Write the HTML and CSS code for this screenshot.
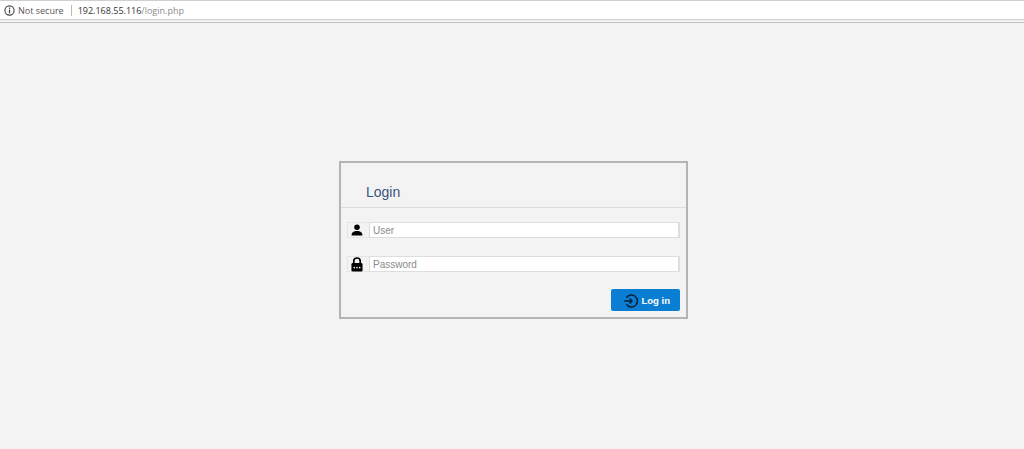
FILE: index.html
```html
<!DOCTYPE html>
<html lang="en">
<head>
    <meta charset="UTF-8">
    <meta name="viewport" content="width=device-width, initial-scale=1.0">
    <title>Login</title>
    <link rel="stylesheet" href="styles.css">
</head>
<body>
    <!-- Browser address bar -->
    <div class="address-bar">
        <svg class="info-icon" width="11" height="11" viewBox="0 0 11 11">
            <circle cx="5.5" cy="5.5" r="4.6" fill="none" stroke="#444" stroke-width="1.1"/>
            <rect x="4.9" y="4.7" width="1.3" height="3.6" fill="#444"/>
            <rect x="4.9" y="2.6" width="1.3" height="1.3" fill="#444"/>
        </svg>
        <span class="not-secure">Not secure</span>
        <span class="divider"></span>
        <span class="host">192.168.55.116</span><span class="path">/login.php</span>
    </div>
    <div class="toolbar-strip"></div>

    <div class="page">
        <div class="login-box">
            <div class="login-header">
                <h1>Login</h1>
            </div>
            <form class="login-form">
                <div class="field">
                    <span class="field-icon">
                        <svg width="12" height="12" viewBox="0 0 13 13">
                            <circle cx="6.5" cy="3.6" r="3" fill="#000"/>
                            <path d="M0.6 12.4 C0.6 8.8 3.4 7.6 6.5 7.6 C9.6 7.6 12.4 8.8 12.4 12.4 Z" fill="#000"/>
                        </svg>
                    </span>
                    <input type="text" placeholder="User">
                </div>
                <div class="field">
                    <span class="field-icon">
                        <svg width="12" height="15" viewBox="0 0 13 16">
                            <path d="M3 7 V4.5 A3.5 3.5 0 0 1 10 4.5 V7" fill="none" stroke="#000" stroke-width="1.8"/>
                            <rect x="0.5" y="6.4" width="12" height="9.2" rx="1.4" fill="#000"/>
                            <circle cx="3.6" cy="11.4" r="0.9" fill="#f2f2f2"/>
                            <circle cx="6.5" cy="11.4" r="0.9" fill="#f2f2f2"/>
                            <circle cx="9.4" cy="11.4" r="0.9" fill="#f2f2f2"/>
                        </svg>
                    </span>
                    <input type="password" placeholder="Password">
                </div>
                <div class="actions">
                    <button type="button">
                        <svg width="14" height="14" viewBox="0 0 15 15">
                            <path d="M2.6 4 A6.4 6.4 0 1 1 2.6 11" fill="none" stroke="#04223a" stroke-width="1.6"/>
                            <path d="M0.3 7.5 H8.5 M6 4.9 L8.6 7.5 L6 10.1" fill="none" stroke="#04223a" stroke-width="1.6"/>
                        </svg>
                        Log in
                    </button>
                </div>
            </form>
        </div>
    </div>
</body>
</html>
```

FILE: styles.css
```css
body {
    margin: 0;
    height: 449px;
    overflow: hidden;
    background-color: #f3f3f3;
    font-family: "Liberation Sans", Arial, sans-serif;
    display: flex;
    flex-direction: column;
}
.address-bar {
    height: 19px;
    background-color: #fff;
    border-top: 1px solid #cfcfcf;
    display: flex;
    align-items: center;
    padding-left: 4px;
    font-family: "Open Sans", sans-serif;
    font-size: 9px;
    box-sizing: border-box;
}
.info-icon {
    margin-right: 3px;
}
.not-secure {
    color: #555;
}
.divider {
    width: 1px;
    height: 11px;
    background-color: #bbb;
    margin: 0 6px 0 7px;
}
.host {
    color: #333;
}
.path {
    color: #8a8a8a;
}
.toolbar-strip {
    height: 4px;
    background-color: #f3f3f3;
    border-top: 1px solid #d0d0d0;
    border-bottom: 1px solid #c4c4c4;
    box-sizing: border-box;
}
.page {
    flex: 1;
    display: flex;
    justify-content: center;
    padding-top: 138px;
    padding-left: 3px;
}
.login-box {
    width: 349px;
    height: 158px;
    border: 2px solid #b4b4b4;
    box-sizing: border-box;
}
.login-header {
    height: 44px;
    border-bottom: 1px solid #dcdcdc;
    box-sizing: content-box;
}
h1 {
    margin: 0;
    padding: 21px 0 0 25px;
    font-size: 14px;
    line-height: 17px;
    font-weight: normal;
    color: #3a5380;
}
.login-form {
    padding: 14px 6px 0 6px;
}
.field {
    display: flex;
    height: 16px;
    margin-bottom: 18px;
    border: 1px solid #e6e6e6;
    border-right: none;
    box-sizing: border-box;
}
.field-icon {
    width: 20px;
    box-sizing: border-box;
    padding-right: 3px;
    display: flex;
    align-items: center;
    justify-content: center;
    flex-shrink: 0;
}
.field input {
    flex: 1;
    min-width: 0;
    border: 1px solid #dedede;
    border-width: 1px 2px 1px 1px;
    margin: -1px 0 -1px 1px;
    padding: 0 3px;
    background-color: #fff;
    font-family: "Liberation Sans", Arial, sans-serif;
    font-size: 10px;
    outline: none;
}
.field input::placeholder {
    color: #8a8a8a;
}
.actions {
    display: flex;
    justify-content: flex-end;
    margin-top: -1px;
}
button {
    width: 69px;
    height: 22px;
    background-color: #0a7ed2;
    color: #fff;
    border: none;
    border-radius: 2px;
    font-family: "Liberation Sans", Arial, sans-serif;
    font-size: 9.5px;
    font-weight: bold;
    display: flex;
    align-items: center;
    justify-content: flex-end;
    gap: 4px;
    padding: 0 10px 0 0;
    cursor: pointer;
}
button svg {
    margin-top: 2px;
}
```
